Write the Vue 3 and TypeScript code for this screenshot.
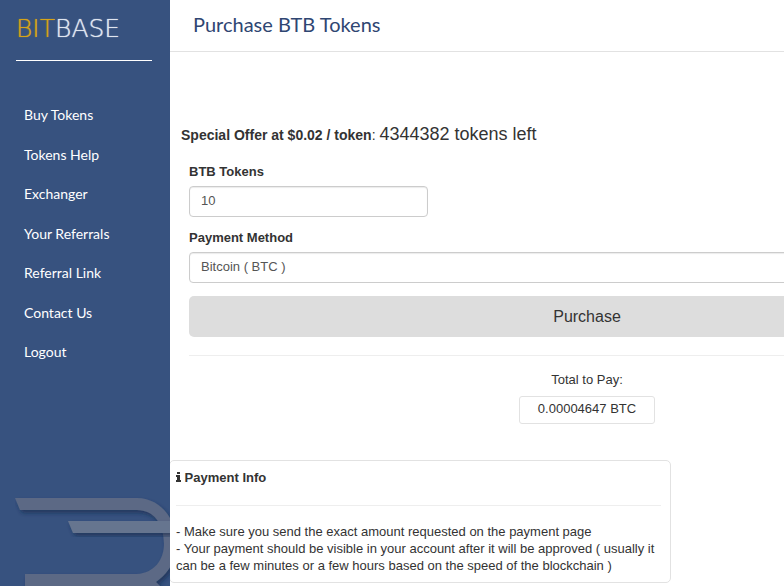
<script setup lang="ts">
import { computed, ref } from 'vue'

const links: string[] = [
  'Buy Tokens',
  'Tokens Help',
  'Exchanger',
  'Your Referrals',
  'Referral Link',
  'Contact Us',
  'Logout',
]

const tokensLeft = 4344382
const rate = 0.000004647
const tokens = ref('10')
const method = ref('BTC')
const total = computed(() => (Number(tokens.value) * rate).toFixed(8))
</script>

<template>
  <div class="page">
    <aside class="sidebar">
      <a class="brand" href="#"><span class="gold">BIT</span>BASE</a>
      <nav class="nav">
        <a v-for="link in links" :key="link" href="#">{{ link }}</a>
      </nav>
      <svg class="mark" viewBox="0 -2 155 92" aria-hidden="true">
        <defs>
          <filter id="shade" x="-10%" y="-10%" width="120%" height="140%">
            <feDropShadow dx="2" dy="3" stdDeviation="2" flood-color="#14284a" flood-opacity="0.6" />
          </filter>
        </defs>
        <path
          filter="url(#shade)"
          fill="#5b6985"
          d="M0 2H122C137 2 149 11 155 22C160 31 162 39 162 47C162 62 155 76 141 86L157 102H10V78H122C139 77 149 64 149 48C149 28 139 14 122 14H5Z"
        />
        <path filter="url(#shade)" fill="#66758f" d="M53 25H170V37H58Z" />
      </svg>
    </aside>

    <main class="main">
      <header class="header">
        <h1>Purchase BTB Tokens</h1>
      </header>

      <p class="offer">
        <strong>Special Offer at $0.02 / token</strong>: <span class="left">{{ tokensLeft }} tokens left</span>
      </p>

      <form class="form" @submit.prevent>
        <label for="tokens">BTB Tokens</label>
        <input id="tokens" v-model="tokens" class="control amount" type="text" />
        <label for="method">Payment Method</label>
        <select id="method" v-model="method" class="control">
          <option value="BTC">Bitcoin ( BTC )</option>
        </select>
        <button class="purchase" type="submit">Purchase</button>
        <div class="total">
          <label for="total">Total to Pay:</label>
          <output id="total">{{ total }} BTC</output>
        </div>
      </form>

      <section class="info">
        <h2>
          <svg width="5" height="10" viewBox="0 0 5 10" aria-hidden="true">
            <path fill="currentColor" d="M1 0H4V2H1ZM0 3H4V8H5V10H0V8H1V5H0Z" />
          </svg>
          Payment Info
        </h2>
        <p>
          - Make sure you send the exact amount requested on the payment page<br />
          - Your payment should be visible in your account after it will be approved ( usually it
          can be a few minutes or a few hours based on the speed of the blockchain )
        </p>
      </section>
    </main>
  </div>
</template>

<style>
body {
  background: #fff;
}
</style>

<style scoped>
* {
  box-sizing: border-box;
}

.page {
  display: flex;
  height: 100vh;
  overflow: hidden;
  color: #333;
  font: 13px/17px "Liberation Sans", Arial, sans-serif;
}

.sidebar {
  display: flex;
  flex: 0 0 170px;
  flex-direction: column;
  overflow: hidden;
  background: #37527f;
}

.brand {
  margin: 0 18px 0 16px;
  padding: 16px 0 19px;
  border-bottom: 1px solid #fff;
  color: #dfe5ef;
  font: 200 25px/25px "DejaVu Sans", sans-serif;
  text-decoration: none;
  text-shadow: 0 0 1px currentColor;
}

.gold {
  color: #d6a419;
}

.nav {
  display: flex;
  flex: 0 0 301px;
  flex-direction: column;
  justify-content: space-between;
  padding: 44px 24px 0;
}

.nav a {
  color: #fff;
  font: 14px/20px Lato, sans-serif;
  text-decoration: none;
}

.mark {
  display: block;
  flex: none;
  width: 155px;
  height: 92px;
  margin: auto 0 0 15px;
}

.main {
  flex: 1;
  min-width: 0;
  overflow: hidden;
}

.header {
  height: 52px;
  padding: 10px 23px;
  border-bottom: 1px solid #e2e2e2;
}

h1 {
  margin: 0;
  color: #2f4672;
  font: 20px/28px Lato, sans-serif;
}

.offer {
  margin: 0;
  padding: 70px 11px 0;
  font-size: 14px;
  line-height: 24px;
}

.left {
  font-size: 18px;
}

.form {
  display: flex;
  flex-direction: column;
  min-width: 834px;
  padding: 16px 19px 0;
}

.form > label {
  margin-bottom: 6px;
  font-weight: bold;
}

.control {
  width: 100%;
  height: 31px;
  margin: 0 0 12px;
  padding: 0 11px 3px;
  border: 1px solid #ccc;
  border-radius: 4px;
  background: #fff;
  box-shadow: inset 0 1px 1px rgba(0, 0, 0, 0.08);
  color: #555;
  font: inherit;
  appearance: none;
}

.amount {
  width: 30%;
}

.purchase {
  height: 41px;
  margin-top: 1px;
  padding: 0;
  border: 0;
  border-radius: 5px;
  background: #ddd;
  color: #333;
  font: 16px/24px "Liberation Sans", Arial, sans-serif;
}

.total {
  display: flex;
  flex-direction: column;
  align-items: center;
  gap: 8px;
  margin-top: 18px;
  padding-top: 15px;
  border-top: 1px solid #eee;
}

.total output {
  padding: 3px 18px 6px;
  border: 1px solid #e2e2e2;
  border-radius: 3px;
}

.info {
  max-width: 502px;
  margin: 36px 0 0 -1px;
  padding: 8px 9px 8px 6px;
  border: 1px solid #e2e2e2;
  border-radius: 5px;
}

h2 {
  margin: 0 0 17px;
  padding-bottom: 19px;
  border-bottom: 1px solid #eee;
  font: bold 13px/17px "Liberation Sans", Arial, sans-serif;
}

.info p {
  margin: 0;
}
</style>
